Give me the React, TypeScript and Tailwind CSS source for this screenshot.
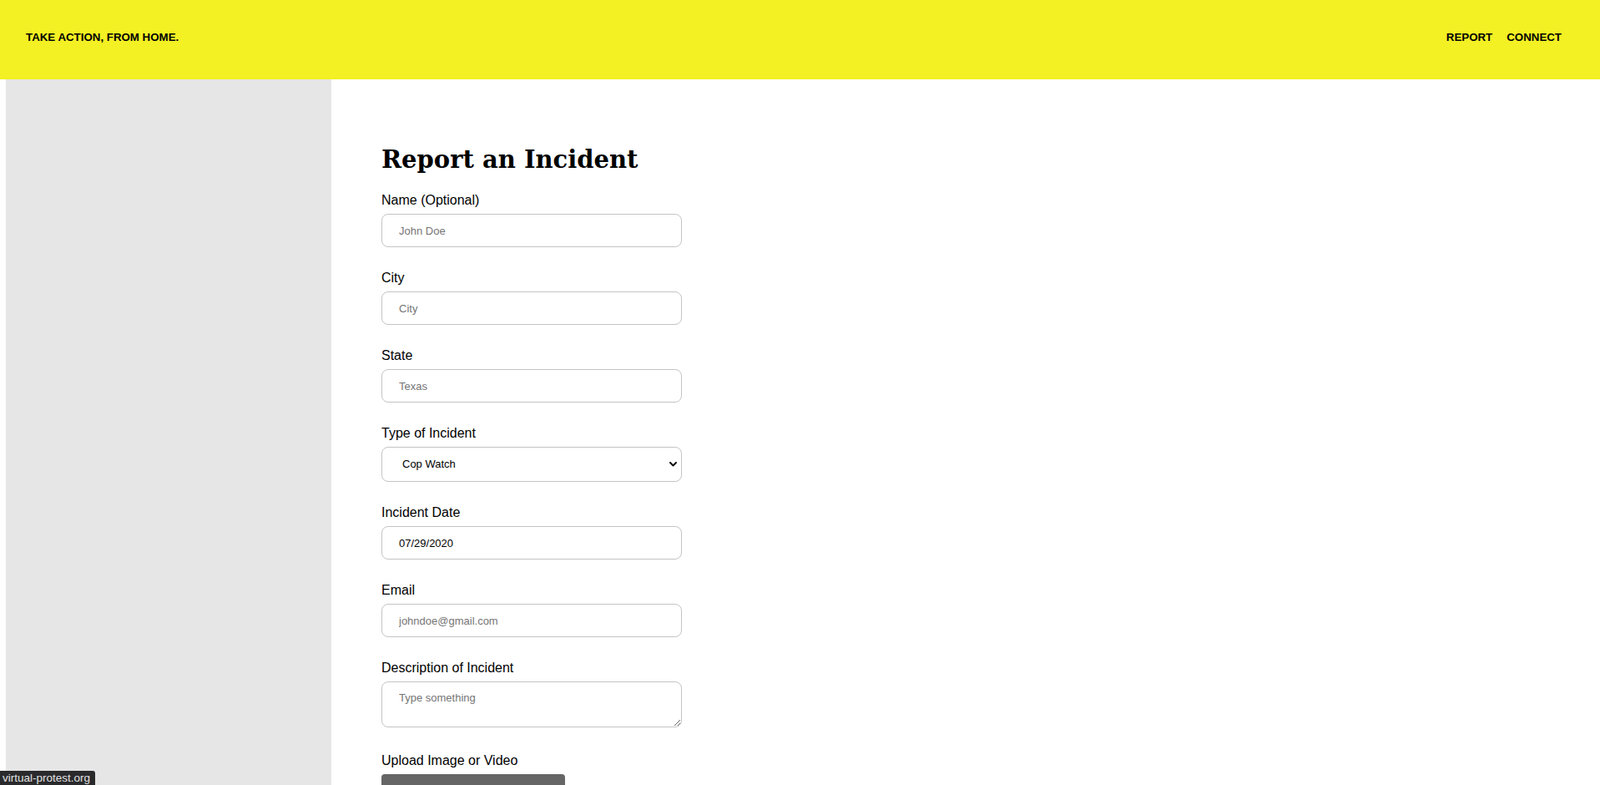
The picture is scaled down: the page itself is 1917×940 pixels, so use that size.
import React from 'react';

const sans = "font-['Liberation_Sans',Arial,sans-serif]";

const inputCls =
  'block w-[360px] h-[40px] rounded-[8px] border border-[#c4c4c4] bg-white pl-5 pr-3 text-[13px] text-black placeholder:text-[#757575] outline-none';

const Field: React.FC<{ label: string; children: React.ReactNode; className?: string }> = ({
  label,
  children,
  className = 'mb-[28px]',
}) => (
  <div className={className}>
    <label className="block text-base leading-[18px] text-black mb-[7px]">{label}</label>
    {children}
  </div>
);

const App: React.FC = () => {
  return (
    <div className={`min-h-screen bg-white ${sans}`}>
      {/* Header */}
      <header className="h-[95px] bg-[#f3f023] flex justify-between items-start pt-[37px] pl-[31px] pr-[46px]">
        <div className="text-[13.3px] leading-[15px] font-bold text-black">TAKE ACTION, FROM HOME.</div>
        <nav className="flex gap-[17px] text-[13.3px] leading-[15px] font-bold text-black">
          <a href="#">REPORT</a>
          <a href="#">CONNECT</a>
        </nav>
      </header>

      <div className="flex pl-[7px] min-h-[1100px]">
        {/* Sidebar */}
        <aside className="w-[390px] shrink-0 bg-[#e6e6e6]" />

        {/* Form */}
        <main className="pl-[60px] pt-[78px]">
          <h1 className="font-['DejaVu_Serif',Georgia,serif] font-bold text-[29px] leading-[37px] text-black mb-[21px]">
            Report an Incident
          </h1>

          <form onSubmit={(e) => e.preventDefault()}>
            <Field label="Name (Optional)">
              <input type="text" placeholder="John Doe" className={inputCls} />
            </Field>
            <Field label="City">
              <input type="text" placeholder="City" className={inputCls} />
            </Field>
            <Field label="State">
              <input type="text" placeholder="Texas" className={inputCls} />
            </Field>
            <Field label="Type of Incident">
              <div className="relative w-[360px]">
                <select
                  defaultValue="cop"
                  className="block w-[360px] h-[42px] appearance-none rounded-[8px] border border-[#c4c4c4] bg-white pl-[24px] pr-8 text-[13px] text-black outline-none"
                >
                  <option value="cop">Cop Watch</option>
                  <option value="protest">Protest</option>
                  <option value="other">Other</option>
                </select>
                <svg
                  className="pointer-events-none absolute right-[6px] top-[18px]"
                  width="9"
                  height="6"
                  viewBox="0 0 9 6"
                  fill="none"
                >
                  <path d="M1 1l3.5 3.5L8 1" stroke="#111" strokeWidth="2" strokeLinecap="round" strokeLinejoin="round" />
                </svg>
              </div>
            </Field>
            <Field label="Incident Date">
              <input type="text" defaultValue="07/29/2020" className={inputCls} />
            </Field>
            <Field label="Email">
              <input type="email" placeholder="johndoe@gmail.com" className={inputCls} />
            </Field>
            <Field label="Description of Incident" className="mb-[31px]">
              <textarea
                placeholder="Type something"
                className="block w-[360px] h-[55px] rounded-[8px] border border-[#c4c4c4] bg-white pl-5 pr-3 pt-[11px] text-[13px] leading-[15px] text-black placeholder:text-[#757575] outline-none"
              />
            </Field>
            <Field label="Upload Image or Video">
              <button type="button" className="block w-[220px] h-[40px] rounded-[4px] bg-[#666666] text-white text-[13px]" />
            </Field>
          </form>
        </main>
      </div>

      {/* Browser status bubble */}
      <div className="fixed left-0 bottom-0 h-[17px] w-[114px] bg-[#2a2a2c] rounded-tr-[3px] text-[13.5px] leading-[17px] text-[#e2e2e2] pl-[3px] whitespace-nowrap overflow-hidden font-['Liberation_Sans',Arial,sans-serif]">
        virtual-protest.org
      </div>
    </div>
  );
};

export default App;
